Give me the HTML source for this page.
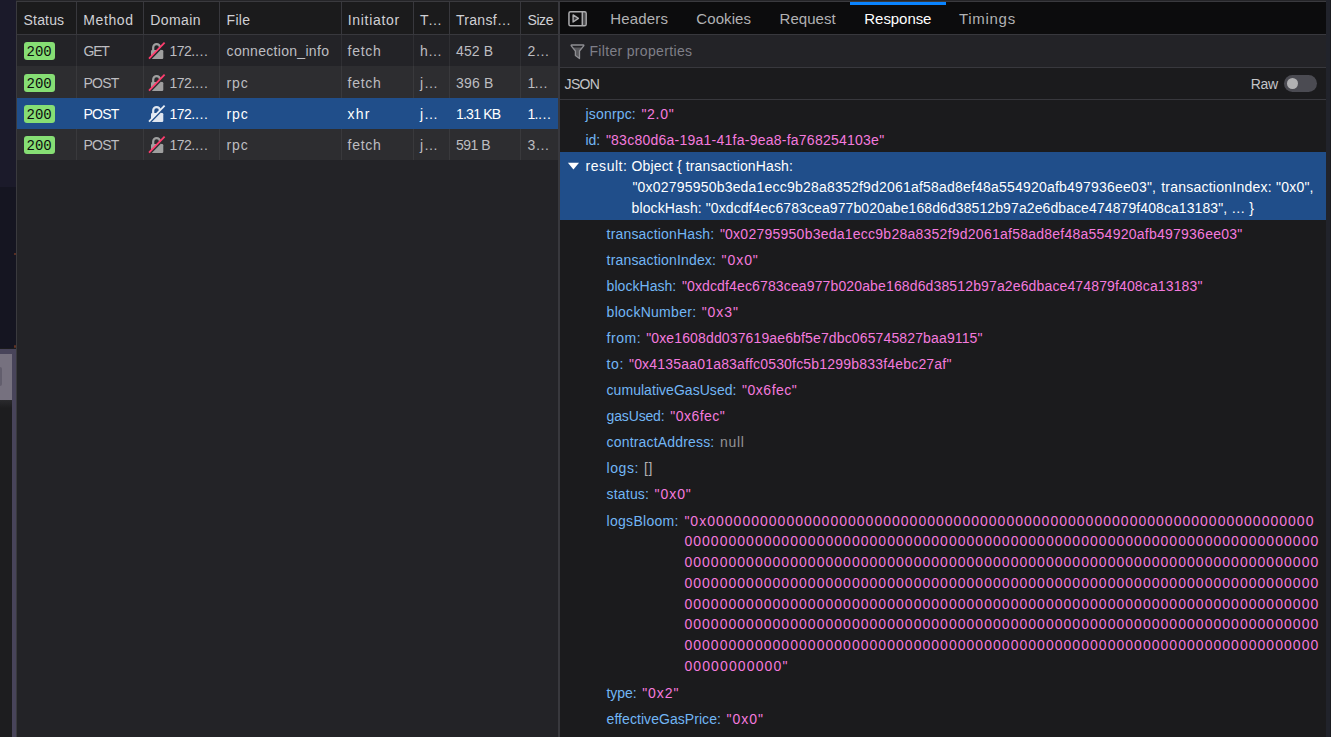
<!DOCTYPE html>
<html><head><meta charset="utf-8"><style>
html,body{margin:0;padding:0;width:1331px;height:737px;overflow:hidden;background:#1b1b1d}
.r{position:absolute;box-sizing:border-box}
.t{position:absolute;white-space:pre;line-height:20px;font-family:'Liberation Sans',sans-serif}
</style></head><body>
<div class="r" style="left:0px;top:0px;width:16px;height:187px;background:#1b1a2a;"></div><div class="r" style="left:0px;top:187px;width:16px;height:161px;background:#151521;"></div><div class="r" style="left:0px;top:349px;width:16px;height:388px;background:#48445a;"></div><div class="r" style="left:0px;top:354px;width:12px;height:46px;background:#76717f;"></div><div class="r" style="left:0px;top:400px;width:12px;height:337px;background:#1d1d1f;"></div><div class="r" style="left:0px;top:400px;width:12px;height:8px;background:linear-gradient(#2a2a2d,#1d1d1f);"></div><div class="r" style="left:13.5px;top:345px;width:2.5px;height:2.5px;background:rgba(190,90,40,0.45);border-radius:50%"></div><div class="r" style="left:14px;top:253px;width:2px;height:2px;background:rgba(200,90,40,0.5);border-radius:50%"></div><div class="r" style="left:-3px;top:367px;width:5px;height:19px;background:#625e6d;border-radius:2px"></div><div class="r" style="left:16px;top:0px;width:1315px;height:1px;background:#252528;"></div><div class="r" style="left:16px;top:1px;width:1315px;height:1px;background:#3a3a3e;"></div><div class="r" style="left:16px;top:2px;width:542px;height:737px;background:#232327;"></div><div class="r" style="left:16px;top:2px;width:542px;height:32px;background:#1b1b1c;"></div><div class="r" style="left:16px;top:34px;width:542px;height:1px;background:#38383d;"></div><div class="r" style="left:16px;top:35px;width:542px;height:31px;background:#232327;"></div><div class="r" style="left:16px;top:66px;width:542px;height:32px;background:#2d2d30;"></div><div class="r" style="left:16px;top:98px;width:542px;height:31px;background:#204e8a;"></div><div class="r" style="left:16px;top:129px;width:542px;height:31px;background:#2d2d30;"></div><div class="r" style="left:16px;top:2px;width:1px;height:735px;background:#3a3a3e;"></div><div class="r" style="left:76px;top:2px;width:1px;height:32px;background:#38383d;"></div><div class="r" style="left:76px;top:35px;width:1px;height:63px;background:rgba(255,255,255,0.06);"></div><div class="r" style="left:76px;top:129px;width:1px;height:31px;background:rgba(255,255,255,0.06);"></div><div class="r" style="left:143px;top:2px;width:1px;height:32px;background:#38383d;"></div><div class="r" style="left:143px;top:35px;width:1px;height:63px;background:rgba(255,255,255,0.06);"></div><div class="r" style="left:143px;top:129px;width:1px;height:31px;background:rgba(255,255,255,0.06);"></div><div class="r" style="left:219px;top:2px;width:1px;height:32px;background:#38383d;"></div><div class="r" style="left:219px;top:35px;width:1px;height:63px;background:rgba(255,255,255,0.06);"></div><div class="r" style="left:219px;top:129px;width:1px;height:31px;background:rgba(255,255,255,0.06);"></div><div class="r" style="left:341px;top:2px;width:1px;height:32px;background:#38383d;"></div><div class="r" style="left:341px;top:35px;width:1px;height:63px;background:rgba(255,255,255,0.06);"></div><div class="r" style="left:341px;top:129px;width:1px;height:31px;background:rgba(255,255,255,0.06);"></div><div class="r" style="left:413px;top:2px;width:1px;height:32px;background:#38383d;"></div><div class="r" style="left:413px;top:35px;width:1px;height:63px;background:rgba(255,255,255,0.06);"></div><div class="r" style="left:413px;top:129px;width:1px;height:31px;background:rgba(255,255,255,0.06);"></div><div class="r" style="left:449px;top:2px;width:1px;height:32px;background:#38383d;"></div><div class="r" style="left:449px;top:35px;width:1px;height:63px;background:rgba(255,255,255,0.06);"></div><div class="r" style="left:449px;top:129px;width:1px;height:31px;background:rgba(255,255,255,0.06);"></div><div class="r" style="left:520px;top:2px;width:1px;height:32px;background:#38383d;"></div><div class="r" style="left:520px;top:35px;width:1px;height:63px;background:rgba(255,255,255,0.06);"></div><div class="r" style="left:520px;top:129px;width:1px;height:31px;background:rgba(255,255,255,0.06);"></div><div class="r" style="left:558px;top:2px;width:2px;height:735px;background:#38383d;"></div><div class="r" style="left:560px;top:2px;width:766px;height:32px;background:#0c0c0d;"></div><div class="r" style="left:560px;top:34px;width:766px;height:1px;background:#38383d;"></div><div class="r" style="left:560px;top:35px;width:766px;height:32px;background:#232327;"></div><div class="r" style="left:560px;top:67px;width:766px;height:1px;background:#38383d;"></div><div class="r" style="left:560px;top:68px;width:766px;height:31px;background:#1b1b1d;"></div><div class="r" style="left:560px;top:99px;width:766px;height:1px;background:#38383d;"></div><div class="r" style="left:560px;top:100px;width:766px;height:637px;background:#1b1b1d;"></div><div class="r" style="left:560px;top:152px;width:766px;height:68px;background:#204e8a;"></div><div class="r" style="left:850px;top:2px;width:96px;height:3px;background:#0a84ff;"></div><div class="r" style="left:1326px;top:0px;width:5px;height:737px;background:#21232b;"></div><div class="r" style="left:1330px;top:0px;width:1px;height:737px;background:#1a1b20;"></div><div class="r" style="left:1284px;top:75px;width:33px;height:17px;background:#4b4b52;border-radius:9px"></div><div class="r" style="left:1287px;top:78px;width:11px;height:11px;background:#b1b1b3;border-radius:50%"></div><div class="r" style="left:24px;top:42px;width:31px;height:18px;background:#86de74;border-radius:3px"></div><div class="r" style="left:24px;top:74px;width:31px;height:18px;background:#86de74;border-radius:3px"></div><div class="r" style="left:24px;top:105px;width:31px;height:18px;background:#86de74;border-radius:3px"></div><div class="r" style="left:24px;top:136px;width:31px;height:18px;background:#86de74;border-radius:3px"></div>
<svg class="r" style="left:147px;top:41px" width="20" height="19" viewBox="0 0 20 19">
<path d="M6.2 9.2 V6.5 A3.4 3.4 0 0 1 13 6.5 V9.2" fill="none" stroke="#9f9f9f" stroke-width="2.2"/>
<rect x="4" y="9" width="12.3" height="8.9" rx="1.2" fill="#9f9f9f"/>
<line x1="3" y1="18.4" x2="18.4" y2="2.6" stroke="#232327" stroke-width="2"/>
<line x1="2" y1="17.6" x2="17.6" y2="1.6" stroke="#ff3d6e" stroke-width="1.8"/>
</svg><svg class="r" style="left:147px;top:73px" width="20" height="19" viewBox="0 0 20 19">
<path d="M6.2 9.2 V6.5 A3.4 3.4 0 0 1 13 6.5 V9.2" fill="none" stroke="#9f9f9f" stroke-width="2.2"/>
<rect x="4" y="9" width="12.3" height="8.9" rx="1.2" fill="#9f9f9f"/>
<line x1="3" y1="18.4" x2="18.4" y2="2.6" stroke="#2d2d30" stroke-width="2"/>
<line x1="2" y1="17.6" x2="17.6" y2="1.6" stroke="#ff3d6e" stroke-width="1.8"/>
</svg><svg class="r" style="left:147px;top:104px" width="20" height="19" viewBox="0 0 20 19">
<path d="M6.2 9.2 V6.5 A3.4 3.4 0 0 1 13 6.5 V9.2" fill="none" stroke="#dfe6f0" stroke-width="2.2"/>
<rect x="4" y="9" width="12.3" height="8.9" rx="1.2" fill="#dfe6f0"/>
<line x1="3" y1="18.4" x2="18.4" y2="2.6" stroke="#204e8a" stroke-width="2"/>
<line x1="2" y1="17.6" x2="17.6" y2="1.6" stroke="#e8eef5" stroke-width="1.8"/>
</svg><svg class="r" style="left:147px;top:135px" width="20" height="19" viewBox="0 0 20 19">
<path d="M6.2 9.2 V6.5 A3.4 3.4 0 0 1 13 6.5 V9.2" fill="none" stroke="#9f9f9f" stroke-width="2.2"/>
<rect x="4" y="9" width="12.3" height="8.9" rx="1.2" fill="#9f9f9f"/>
<line x1="3" y1="18.4" x2="18.4" y2="2.6" stroke="#2d2d30" stroke-width="2"/>
<line x1="2" y1="17.6" x2="17.6" y2="1.6" stroke="#ff3d6e" stroke-width="1.8"/>
</svg><svg class="r" style="left:562px;top:6px" width="30" height="26" viewBox="0 0 30 26">
<rect x="21.05" y="5.6" width="2.4" height="14.2" fill="#4b4b4d"/>
<path d="M11.1 8.9 L16.4 12.45 L11.1 16 Z" fill="#3a3a3c" stroke="#acacae" stroke-width="1.4" stroke-linejoin="round"/>
<rect x="6.95" y="5.65" width="17.2" height="14.1" rx="1.6" fill="none" stroke="#acacae" stroke-width="1.5"/>
<line x1="20.3" y1="5.65" x2="20.3" y2="19.75" stroke="#acacae" stroke-width="1.5"/>
</svg><svg class="r" style="left:566px;top:40px" width="24" height="24" viewBox="0 0 24 24">
<path d="M7.3 7.6 H15.9 L13.5 11 V18.4 L9.4 15.5 V11 Z" fill="#59595d"/>
<path d="M5.6 5 H17.4 Q18.2 5 17.7 5.8 L13.5 11 V18.6 L9.4 15.6 V11 L5.3 5.8 Q4.8 5 5.6 5 Z" fill="none" stroke="#8f8f93" stroke-width="1.3" stroke-linejoin="round"/>
</svg><svg class="r" style="left:567px;top:161px" width="13" height="11" viewBox="0 0 13 11">
<path d="M0.9 1.8 H12 L6.45 8.4 Z" fill="#ffffff"/>
</svg>
<span class="t" style="left:23.58px;top:10.15px;font-size:14px;letter-spacing:0.170px;color:#d0d0d4;font-family:'Liberation Sans'">Status</span><span class="t" style="left:83.28px;top:10.15px;font-size:14px;letter-spacing:0.609px;color:#d0d0d4;font-family:'Liberation Sans'">Method</span><span class="t" style="left:150.18px;top:10.15px;font-size:14px;letter-spacing:0.440px;color:#d0d0d4;font-family:'Liberation Sans'">Domain</span><span class="t" style="left:226.58px;top:10.15px;font-size:14px;letter-spacing:0.260px;color:#d0d0d4;font-family:'Liberation Sans'">File</span><span class="t" style="left:347.78px;top:10.15px;font-size:14px;letter-spacing:0.691px;color:#d0d0d4;font-family:'Liberation Sans'">Initiator</span><span class="t" style="left:419.98px;top:10.15px;font-size:14px;letter-spacing:-0.612px;color:#d0d0d4;font-family:'Liberation Sans'">T…</span><span class="t" style="left:455.98px;top:10.15px;font-size:14px;letter-spacing:0.297px;color:#d0d0d4;font-family:'Liberation Sans'">Transf…</span><span class="t" style="left:527.58px;top:10.15px;font-size:14px;letter-spacing:-0.465px;color:#d0d0d4;font-family:'Liberation Sans'">Size</span><span class="t" style="left:83.58px;top:41.15px;font-size:14px;letter-spacing:-1.220px;color:#bdbdc1;font-family:'Liberation Sans'">GET</span><span class="t" style="left:169.58px;top:41.15px;font-size:14px;letter-spacing:-0.602px;color:#bdbdc1;font-family:'Liberation Sans'">172.…</span><span class="t" style="left:226.58px;top:41.15px;font-size:14px;letter-spacing:0.305px;color:#bdbdc1;font-family:'Liberation Sans'">connection_info</span><span class="t" style="left:347.58px;top:41.15px;font-size:14px;letter-spacing:0.722px;color:#bdbdc1;font-family:'Liberation Sans'">fetch</span><span class="t" style="left:419.98px;top:41.15px;font-size:14px;letter-spacing:0.154px;color:#bdbdc1;font-family:'Liberation Sans'">h…</span><span class="t" style="left:455.98px;top:41.15px;font-size:14px;letter-spacing:0.139px;color:#bdbdc1;font-family:'Liberation Sans'">452 B</span><span class="t" style="left:527.58px;top:41.15px;font-size:14px;letter-spacing:0.054px;color:#bdbdc1;font-family:'Liberation Sans'">2…</span><span class="t" style="left:83.58px;top:73.15px;font-size:14px;letter-spacing:-0.826px;color:#bdbdc1;font-family:'Liberation Sans'">POST</span><span class="t" style="left:169.58px;top:73.15px;font-size:14px;letter-spacing:-0.602px;color:#bdbdc1;font-family:'Liberation Sans'">172.…</span><span class="t" style="left:226.58px;top:73.15px;font-size:14px;letter-spacing:0.846px;color:#bdbdc1;font-family:'Liberation Sans'">rpc</span><span class="t" style="left:347.58px;top:73.15px;font-size:14px;letter-spacing:0.722px;color:#bdbdc1;font-family:'Liberation Sans'">fetch</span><span class="t" style="left:419.98px;top:73.15px;font-size:14px;letter-spacing:0.830px;color:#bdbdc1;font-family:'Liberation Sans'">j…</span><span class="t" style="left:455.98px;top:73.15px;font-size:14px;letter-spacing:0.214px;color:#bdbdc1;font-family:'Liberation Sans'">396 B</span><span class="t" style="left:527.58px;top:73.15px;font-size:14px;letter-spacing:-1.346px;color:#bdbdc1;font-family:'Liberation Sans'">1…</span><span class="t" style="left:83.58px;top:104.15px;font-size:14px;letter-spacing:-0.826px;color:#ffffff;font-family:'Liberation Sans'">POST</span><span class="t" style="left:169.58px;top:104.15px;font-size:14px;letter-spacing:-0.602px;color:#ffffff;font-family:'Liberation Sans'">172.…</span><span class="t" style="left:226.58px;top:104.15px;font-size:14px;letter-spacing:0.846px;color:#ffffff;font-family:'Liberation Sans'">rpc</span><span class="t" style="left:347.58px;top:104.15px;font-size:14px;letter-spacing:1.196px;color:#ffffff;font-family:'Liberation Sans'">xhr</span><span class="t" style="left:419.98px;top:104.15px;font-size:14px;letter-spacing:0.830px;color:#ffffff;font-family:'Liberation Sans'">j…</span><span class="t" style="left:455.98px;top:104.15px;font-size:14px;letter-spacing:-0.762px;color:#ffffff;font-family:'Liberation Sans'">1.31 KB</span><span class="t" style="left:527.58px;top:104.15px;font-size:14px;letter-spacing:-0.918px;color:#ffffff;font-family:'Liberation Sans'">1.…</span><span class="t" style="left:83.58px;top:135.15px;font-size:14px;letter-spacing:-0.826px;color:#bdbdc1;font-family:'Liberation Sans'">POST</span><span class="t" style="left:169.58px;top:135.15px;font-size:14px;letter-spacing:-0.602px;color:#bdbdc1;font-family:'Liberation Sans'">172.…</span><span class="t" style="left:226.58px;top:135.15px;font-size:14px;letter-spacing:0.846px;color:#bdbdc1;font-family:'Liberation Sans'">rpc</span><span class="t" style="left:347.58px;top:135.15px;font-size:14px;letter-spacing:0.722px;color:#bdbdc1;font-family:'Liberation Sans'">fetch</span><span class="t" style="left:419.98px;top:135.15px;font-size:14px;letter-spacing:0.830px;color:#bdbdc1;font-family:'Liberation Sans'">j…</span><span class="t" style="left:455.98px;top:135.15px;font-size:14px;letter-spacing:-0.486px;color:#bdbdc1;font-family:'Liberation Sans'">591 B</span><span class="t" style="left:527.58px;top:135.15px;font-size:14px;letter-spacing:0.054px;color:#bdbdc1;font-family:'Liberation Sans'">3…</span><span class="t" style="left:610.25px;top:8.80px;font-size:15px;letter-spacing:0.184px;color:#b1b1b3;font-family:'Liberation Sans'">Headers</span><span class="t" style="left:696.25px;top:8.80px;font-size:15px;letter-spacing:0.101px;color:#b1b1b3;font-family:'Liberation Sans'">Cookies</span><span class="t" style="left:779.55px;top:8.80px;font-size:15px;letter-spacing:0.038px;color:#b1b1b3;font-family:'Liberation Sans'">Request</span><span class="t" style="left:864.35px;top:8.80px;font-size:15px;letter-spacing:-0.063px;color:#ffffff;font-family:'Liberation Sans'">Response</span><span class="t" style="left:959.05px;top:8.80px;font-size:15px;letter-spacing:0.692px;color:#b1b1b3;font-family:'Liberation Sans'">Timings</span><span class="t" style="left:589.38px;top:41.15px;font-size:14px;letter-spacing:0.337px;color:#7f7f88;font-family:'Liberation Sans'">Filter properties</span><span class="t" style="left:564.58px;top:74.15px;font-size:14px;letter-spacing:-0.699px;color:#c4c4c8;font-family:'Liberation Sans'">JSON</span><span class="t" style="left:1250.78px;top:74.15px;font-size:14px;letter-spacing:-0.283px;color:#c4c4c8;font-family:'Liberation Sans'">Raw</span><span class="t" style="left:585.58px;top:104.45px;font-size:14px;letter-spacing:0.160px;color:#72b6f5;font-family:'Liberation Sans'">jsonrpc:</span><span class="t" style="left:641.38px;top:104.45px;font-size:14px;letter-spacing:0.735px;color:#f47ade;font-family:'Liberation Sans'">&quot;2.0&quot;</span><span class="t" style="left:585.58px;top:130.45px;font-size:14px;letter-spacing:-0.073px;color:#72b6f5;font-family:'Liberation Sans'">id:</span><span class="t" style="left:605.88px;top:130.45px;font-size:14px;letter-spacing:0.245px;color:#f47ade;font-family:'Liberation Sans'">&quot;83c80d6a-19a1-41fa-9ea8-fa768254103e&quot;</span><span class="t" style="left:585.58px;top:156.15px;font-size:14px;letter-spacing:0.536px;color:#ffffff;font-family:'Liberation Sans'">result:</span><span class="t" style="left:631.58px;top:156.15px;font-size:14px;letter-spacing:0.140px;color:#ffffff;font-family:'Liberation Sans'">Object { transactionHash:</span><span class="t" style="left:632.38px;top:176.85px;font-size:14px;letter-spacing:0.203px;color:#ffffff;font-family:'Liberation Sans'">&quot;0x02795950b3eda1ecc9b28a8352f9d2061af58ad8ef48a554920afb497936ee03&quot;,</span><span class="t" style="left:1161.18px;top:176.85px;font-size:14px;letter-spacing:0.236px;color:#ffffff;font-family:'Liberation Sans'">transactionIndex: &quot;0x0&quot;,</span><span class="t" style="left:631.58px;top:197.55px;font-size:14px;letter-spacing:0.092px;color:#ffffff;font-family:'Liberation Sans'">blockHash: &quot;0xdcdf4ec6783cea977b020abe168d6d38512b97a2e6dbace474879f408ca13183&quot;, … }</span><span class="t" style="left:606.58px;top:224.25px;font-size:14px;letter-spacing:0.172px;color:#72b6f5;font-family:'Liberation Sans'">transactionHash:</span><span class="t" style="left:719.88px;top:224.25px;font-size:14px;letter-spacing:0.246px;color:#f47ade;font-family:'Liberation Sans'">&quot;0x02795950b3eda1ecc9b28a8352f9d2061af58ad8ef48a554920afb497936ee03&quot;</span><span class="t" style="left:606.58px;top:250.25px;font-size:14px;letter-spacing:0.170px;color:#72b6f5;font-family:'Liberation Sans'">transactionIndex:</span><span class="t" style="left:721.58px;top:250.25px;font-size:14px;letter-spacing:0.932px;color:#f47ade;font-family:'Liberation Sans'">&quot;0x0&quot;</span><span class="t" style="left:606.58px;top:276.25px;font-size:14px;letter-spacing:0.043px;color:#72b6f5;font-family:'Liberation Sans'">blockHash:</span><span class="t" style="left:681.88px;top:276.25px;font-size:14px;letter-spacing:0.138px;color:#f47ade;font-family:'Liberation Sans'">&quot;0xdcdf4ec6783cea977b020abe168d6d38512b97a2e6dbace474879f408ca13183&quot;</span><span class="t" style="left:606.58px;top:302.25px;font-size:14px;letter-spacing:0.280px;color:#72b6f5;font-family:'Liberation Sans'">blockNumber:</span><span class="t" style="left:701.68px;top:302.25px;font-size:14px;letter-spacing:0.932px;color:#f47ade;font-family:'Liberation Sans'">&quot;0x3&quot;</span><span class="t" style="left:606.58px;top:328.25px;font-size:14px;letter-spacing:0.513px;color:#72b6f5;font-family:'Liberation Sans'">from:</span><span class="t" style="left:646.18px;top:328.25px;font-size:14px;letter-spacing:0.137px;color:#f47ade;font-family:'Liberation Sans'">&quot;0xe1608dd037619ae6bf5e7dbc065745827baa9115&quot;</span><span class="t" style="left:606.58px;top:354.25px;font-size:14px;letter-spacing:0.587px;color:#72b6f5;font-family:'Liberation Sans'">to:</span><span class="t" style="left:628.98px;top:354.25px;font-size:14px;letter-spacing:0.194px;color:#f47ade;font-family:'Liberation Sans'">&quot;0x4135aa01a83affc0530fc5b1299b833f4ebc27af&quot;</span><span class="t" style="left:606.58px;top:380.25px;font-size:14px;letter-spacing:0.040px;color:#72b6f5;font-family:'Liberation Sans'">cumulativeGasUsed:</span><span class="t" style="left:742.08px;top:380.25px;font-size:14px;letter-spacing:0.507px;color:#f47ade;font-family:'Liberation Sans'">&quot;0x6fec&quot;</span><span class="t" style="left:606.58px;top:406.25px;font-size:14px;letter-spacing:-0.158px;color:#72b6f5;font-family:'Liberation Sans'">gasUsed:</span><span class="t" style="left:670.28px;top:406.25px;font-size:14px;letter-spacing:0.465px;color:#f47ade;font-family:'Liberation Sans'">&quot;0x6fec&quot;</span><span class="t" style="left:606.58px;top:432.25px;font-size:14px;letter-spacing:0.173px;color:#72b6f5;font-family:'Liberation Sans'">contractAddress:</span><span class="t" style="left:719.88px;top:432.25px;font-size:14px;letter-spacing:0.749px;color:#939395;font-family:'Liberation Sans'">null</span><span class="t" style="left:606.58px;top:458.25px;font-size:14px;letter-spacing:0.567px;color:#72b6f5;font-family:'Liberation Sans'">logs:</span><span class="t" style="left:644.08px;top:458.25px;font-size:14px;letter-spacing:0.461px;color:#b1b1b3;font-family:'Liberation Sans'">[]</span><span class="t" style="left:606.58px;top:484.25px;font-size:14px;letter-spacing:0.183px;color:#72b6f5;font-family:'Liberation Sans'">status:</span><span class="t" style="left:654.58px;top:484.25px;font-size:14px;letter-spacing:0.932px;color:#f47ade;font-family:'Liberation Sans'">&quot;0x0&quot;</span><span class="t" style="left:606.58px;top:510.65px;font-size:14px;letter-spacing:0.287px;color:#72b6f5;font-family:'Liberation Sans'">logsBloom:</span><span class="t" style="left:684.38px;top:510.65px;font-size:14px;letter-spacing:1.015px;color:#f47ade;font-family:'Liberation Sans'">&quot;0x000000000000000000000000000000000000000000000000000000000000000000000</span><span class="t" style="left:684.38px;top:531.38px;font-size:14px;letter-spacing:1.032px;color:#f47ade;font-family:'Liberation Sans'">000000000000000000000000000000000000000000000000000000000000000000000000</span><span class="t" style="left:684.38px;top:552.11px;font-size:14px;letter-spacing:1.032px;color:#f47ade;font-family:'Liberation Sans'">000000000000000000000000000000000000000000000000000000000000000000000000</span><span class="t" style="left:684.38px;top:572.84px;font-size:14px;letter-spacing:1.032px;color:#f47ade;font-family:'Liberation Sans'">000000000000000000000000000000000000000000000000000000000000000000000000</span><span class="t" style="left:684.38px;top:593.57px;font-size:14px;letter-spacing:1.032px;color:#f47ade;font-family:'Liberation Sans'">000000000000000000000000000000000000000000000000000000000000000000000000</span><span class="t" style="left:684.38px;top:614.30px;font-size:14px;letter-spacing:1.032px;color:#f47ade;font-family:'Liberation Sans'">000000000000000000000000000000000000000000000000000000000000000000000000</span><span class="t" style="left:684.38px;top:635.03px;font-size:14px;letter-spacing:1.032px;color:#f47ade;font-family:'Liberation Sans'">000000000000000000000000000000000000000000000000000000000000000000000000</span><span class="t" style="left:684.38px;top:655.76px;font-size:14px;letter-spacing:1.129px;color:#f47ade;font-family:'Liberation Sans'">00000000000&quot;</span><span class="t" style="left:606.58px;top:682.95px;font-size:14px;letter-spacing:-0.103px;color:#72b6f5;font-family:'Liberation Sans'">type:</span><span class="t" style="left:642.18px;top:682.95px;font-size:14px;letter-spacing:0.932px;color:#f47ade;font-family:'Liberation Sans'">&quot;0x2&quot;</span><span class="t" style="left:606.58px;top:708.95px;font-size:14px;letter-spacing:0.058px;color:#72b6f5;font-family:'Liberation Sans'">effectiveGasPrice:</span><span class="t" style="left:726.58px;top:708.95px;font-size:14px;letter-spacing:0.957px;color:#f47ade;font-family:'Liberation Sans'">&quot;0x0&quot;</span><span class="t" style="left:26.5px;top:42.15px;font-size:14px;font-family:'Liberation Mono';color:#0c0c0d;letter-spacing:0px">200</span><span class="t" style="left:26.5px;top:74.15px;font-size:14px;font-family:'Liberation Mono';color:#0c0c0d;letter-spacing:0px">200</span><span class="t" style="left:26.5px;top:105.15px;font-size:14px;font-family:'Liberation Mono';color:#0c0c0d;letter-spacing:0px">200</span><span class="t" style="left:26.5px;top:136.15px;font-size:14px;font-family:'Liberation Mono';color:#0c0c0d;letter-spacing:0px">200</span>
</body></html>
